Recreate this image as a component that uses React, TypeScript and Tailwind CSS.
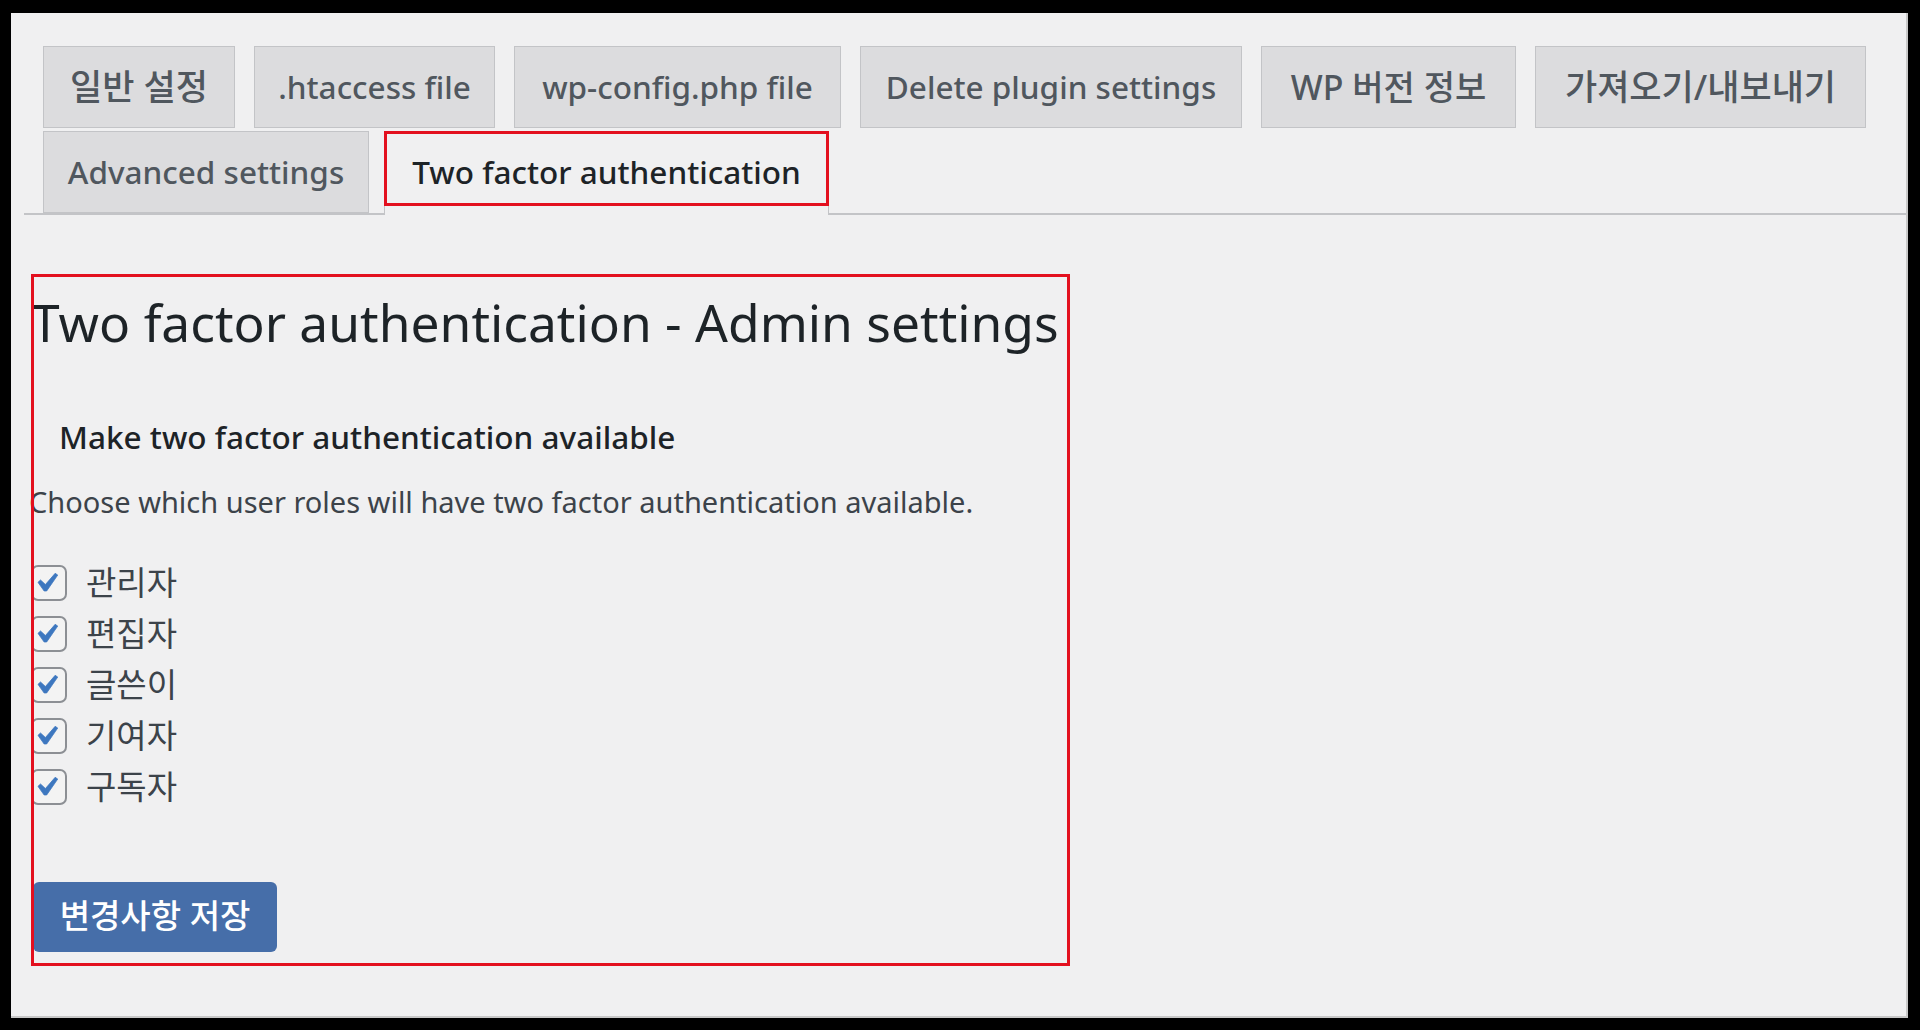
import React from "react";

const tabs = [
  { label: "일반 설정", w: "w-[192px]", size: "text-[35px]" },
  { label: ".htaccess file", w: "w-[241px]", size: "text-[31.5px]" },
  { label: "wp-config.php file", w: "w-[327px]", size: "text-[31.5px]" },
  { label: "Delete plugin settings", w: "w-[382px]", size: "text-[31.5px]" },
  { label: "WP 버전 정보", w: "w-[255px]", size: "text-[34px]" },
  { label: "가져오기/내보내기", w: "w-[331px]", size: "text-[35px]" },
];

const roles = ["관리자", "편집자", "글쓴이", "기여자", "구독자"];

function CheckBox() {
  return (
    <span className="w-[36px] h-[36px] rounded-[7px] border-2 border-[#8c8f94] bg-[#f3f3f3] flex items-center justify-center shrink-0">
      <svg viewBox="0 0 20 20" className="w-[44px] h-[44px] -ml-[6px]">
        <path d="M14.83 4.89l1.34.94-5.81 8.38H9.02L5.78 9.67l1.34-1.25 2.57 2.4z" fill="#3d77bf" stroke="#3d77bf" strokeWidth="0.4" />
      </svg>
    </span>
  );
}

export default function App() {
  return (
    <div
      className="w-[1920px] h-[1030px] bg-black pt-[13px] pl-[11px] pr-[12px] pb-[12px]"
      style={{ fontFamily: '"Noto Sans", "Noto Sans CJK KR", sans-serif' }}
    >
      <div className="h-full bg-[#f0f0f1] pt-[33px] border-r-2 border-b-2 border-[#c8c8c8]">
        {/* tab bar */}
        <div className="ml-[13px] pl-[19px] border-b-2 border-[#c3c4c7] flex flex-wrap gap-y-[3px]">
          {tabs.map((t) => (
            <div
              key={t.label}
              className={`${t.w} ${t.size} h-[82px] mr-[19px] bg-[#dcdcde] border border-[#c3c4c7] flex items-center justify-center font-medium text-[#50575e] whitespace-nowrap`}
            >
              {t.label}
            </div>
          ))}
          <div className="w-[326px] h-[82px] mr-[15px] bg-[#dcdcde] border border-[#c3c4c7] flex items-center justify-center text-[31.5px] font-medium text-[#50575e]">
            Advanced settings
          </div>
          <div className="relative w-[445px] h-[82px] bg-[#f0f0f1] border border-b-0 border-[#c3c4c7] flex items-center justify-center text-[31.5px] font-medium text-[#1d2327] pb-[2px]">
            Two factor authentication
            <div className="absolute left-0 right-0 -bottom-[2px] h-[2px] bg-[#f0f0f1]" />
            <div className="absolute -left-px -right-px -top-px bottom-[7px] border-[3px] border-[#e3101f]" />
          </div>
        </div>

        {/* settings area */}
        <div className="relative ml-[20px] mt-[59px] w-[1039px] h-[692px] flex flex-col text-[#3c434a]">
          <div className="absolute inset-0 border-[3px] border-[#e3101f] z-10 pointer-events-none" />
          <h1 className="mt-[16px] h-[64px] leading-[64px] text-[51.5px] font-normal text-[#1d2327] whitespace-nowrap">
            Two factor authentication - Admin settings
          </h1>
          <div className="mt-[63px] h-[40px] leading-[40px] pl-[28px] text-[31.5px] font-medium text-[#1d2327]">
            Make two factor authentication available
          </div>
          <p className="mt-[25px] h-[40px] leading-[40px] -ml-[2px] text-[29px] whitespace-nowrap">
            Choose which user roles will have two factor authentication available.
          </p>
          <div className="mt-[35px] flex flex-col">
            {roles.map((r) => (
              <label key={r} className="h-[51px] flex items-center">
                <CheckBox />
                <span className="ml-[19px] text-[33px] text-[#3c434a]">{r}</span>
              </label>
            ))}
          </div>
          <button className="mt-[70px] ml-[2px] w-[244px] h-[70px] rounded-[6px] bg-[#466ea9] text-white text-[33px] font-medium flex items-center justify-center pb-[2px]">
            변경사항 저장
          </button>
        </div>
      </div>
    </div>
  );
}
